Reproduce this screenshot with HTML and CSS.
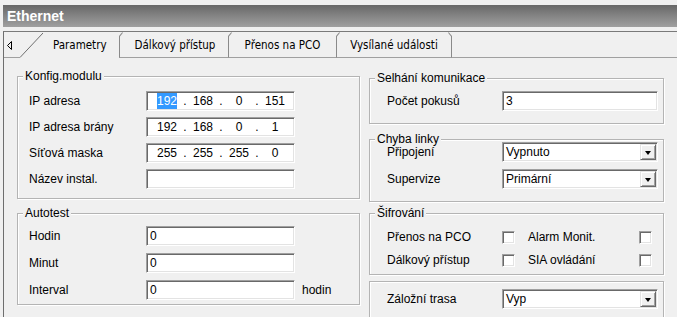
FILE: index.html
```html
<!DOCTYPE html>
<html>
<head>
<meta charset="utf-8">
<link rel="stylesheet" href="styles.css">
</head>
<body>
<div class="win">
  <div class="title">Ethernet</div>
  <div class="body">
    <div class="tabs">
      <div class="tab-scroll">
        <svg width="6" height="9" viewBox="0 0 6 9"><polygon points="4.5,0.5 4.5,8.5 0.5,4.5" fill="none" stroke="#000" stroke-width="1"/></svg>
      </div>
      <div class="tab active">
        <svg class="slant" width="23" height="26" viewBox="0 0 23 26"><line x1="0" y1="25.5" x2="23" y2="1" stroke="#6e6e6e" stroke-width="1"/></svg>
        <span class="tab-label">Parametry</span>
      </div>
      <div class="tab t2">Dálkový přístup</div>
      <div class="tab t3">Přenos na PCO</div>
      <div class="tab t4 last">Vysílané události</div>
      <div class="tab-fill"></div>
    </div>
    <div class="panel">
      <div class="col col-left">
        <div class="group g-konfig">
          <span class="legend">Konfig.modulu</span>
          <div class="row"><span class="label">IP adresa</span>
            <div class="field ip"><span class="oct"><span class="sel">192</span></span><span class="dot">.</span><span class="oct">168</span><span class="dot">.</span><span class="oct">0</span><span class="dot">.</span><span class="oct">151</span></div>
          </div>
          <div class="row"><span class="label">IP adresa brány</span>
            <div class="field ip"><span class="oct">192</span><span class="dot">.</span><span class="oct">168</span><span class="dot">.</span><span class="oct">0</span><span class="dot">.</span><span class="oct">1</span></div>
          </div>
          <div class="row"><span class="label">Síťová maska</span>
            <div class="field ip"><span class="oct">255</span><span class="dot">.</span><span class="oct">255</span><span class="dot">.</span><span class="oct">255</span><span class="dot">.</span><span class="oct">0</span></div>
          </div>
          <div class="row"><span class="label">Název instal.</span>
            <div class="field"></div>
          </div>
        </div>
        <div class="group g-auto">
          <span class="legend">Autotest</span>
          <div class="row"><span class="label">Hodin</span><div class="field">0</div></div>
          <div class="row"><span class="label">Minut</span><div class="field">0</div></div>
          <div class="row"><span class="label">Interval</span><div class="field">0</div><span class="unit">hodin</span></div>
        </div>
      </div>
      <div class="col col-right">
        <div class="group g-selh">
          <span class="legend">Selhání komunikace</span>
          <div class="row"><span class="label">Počet pokusů</span><div class="field">3</div></div>
        </div>
        <div class="group g-chyba">
          <span class="legend">Chyba linky</span>
          <div class="row"><span class="label">Připojení</span><div class="field select">Vypnuto<span class="drop"><span class="arrow"></span></span></div></div>
          <div class="row"><span class="label">Supervize</span><div class="field select">Primární<span class="drop"><span class="arrow"></span></span></div></div>
        </div>
        <div class="group g-sifr">
          <span class="legend">Šifrování</span>
          <div class="row"><span class="label">Přenos na PCO</span><span class="check"></span><span class="label2">Alarm Monit.</span><span class="check"></span></div>
          <div class="row"><span class="label">Dálkový přístup</span><span class="check"></span><span class="label2">SIA ovládání</span><span class="check"></span></div>
        </div>
        <div class="group g-zal">
          <div class="row"><span class="label">Záložní trasa</span><div class="field select">Vyp<span class="drop"><span class="arrow"></span></span></div></div>
        </div>
      </div>
    </div>
  </div>
</div>
</body>
</html>
```

FILE: styles.css
```css
html, body {
  margin: 0;
  padding: 0;
}
body {
  width: 677px;
  height: 317px;
  overflow: hidden;
  background: #f0f0f0;
  font-family: "Liberation Sans", Arial, sans-serif;
  font-size: 12px;
  color: #000;
}
.win {
  padding: 5px 0 0 3px;
}
.title {
  height: 22px;
  line-height: 22px;
  padding-left: 4px;
  background: linear-gradient(#686868, #a0a0a0);
  color: #fff;
  font-weight: bold;
  font-size: 14px;
}
.body {
  margin-top: 4px;
  border-left: 1px solid #6e6e6e;
  border-top: 1px solid #7a7a7a;
  height: 285px;
  overflow: hidden;
}
.tabs {
  display: flex;
  height: 26px;
  font-family: "DejaVu Sans Condensed", "DejaVu Sans", sans-serif;
  font-stretch: condensed;
  font-size: 11.5px;
}
.tab-scroll {
  width: 16px;
  box-sizing: border-box;
  border-bottom: 1px solid #a0a0a0;
  padding: 9px 0 0 3px;
}
.tab-scroll svg {
  display: block;
}
.tab {
  position: relative;
  box-sizing: border-box;
  height: 22px;
  margin-top: 4px;
  border-left: 1px solid #8a8a8a;
  border-bottom: 1px solid #a0a0a0;
  line-height: 19px;
  text-align: center;
  color: #000;
}
.tab::before {
  content: "";
  position: absolute;
  left: -1px;
  top: 0;
  width: 5px;
  height: 1px;
  background: #8a8a8a;
  transform-origin: 0 0;
  transform: rotate(-50deg);
}
.tab.active {
  display: flex;
  height: 26px;
  margin-top: 0;
  border: none;
  width: 99px;
}
.tab.active::before {
  display: none;
}
.slant {
  display: block;
  flex: none;
}
.tab-label {
  padding-left: 10px;
  line-height: 27px;
}
.t2 { width: 109px; padding-left: 2px; }
.t3 { width: 108px; }
.t4 { width: 116px; }
.tab.last {
  border-right: 1px solid #8a8a8a;
}
.tab.last::after {
  content: "";
  position: absolute;
  right: -1px;
  top: 0;
  width: 5px;
  height: 1px;
  background: #8a8a8a;
  transform-origin: 100% 0;
  transform: rotate(50deg);
}
.tab-fill {
  flex: 1;
  border-bottom: 1px solid #a0a0a0;
}
.panel {
  display: flex;
  padding-left: 13px;
}
.col {
  display: flex;
  flex-direction: column;
}
.col-left {
  width: 343px;
}
.col-right {
  width: 295px;
  margin-left: 9px;
}
.group {
  position: relative;
  box-sizing: border-box;
  border: 1px solid #b4b4b4;
  box-shadow: inset 1px 1px 0 #fff, 1px 1px 0 #fff;
  display: flex;
  flex-direction: column;
}
.legend {
  position: absolute;
  left: 5px;
  top: -8px;
  padding: 0 2px;
  background: #f0f0f0;
  line-height: 14px;
}
.col-left .group {
  padding-left: 11px;
}
.col-right .group {
  padding-left: 17px;
}
.g-konfig {
  margin-top: 18px;
  height: 123px;
  padding-top: 14px;
  gap: 6px;
}
.g-auto {
  margin-top: 14px;
  height: 92px;
  padding-top: 12px;
  gap: 7px;
}
.g-selh {
  margin-top: 20px;
  height: 46px;
  padding-top: 12px;
}
.g-chyba {
  margin-top: 15px;
  height: 63px;
  padding-top: 2px;
  gap: 7px;
}
.g-sifr {
  margin-top: 11px;
  height: 62px;
  padding-top: 13px;
  gap: 3px;
}
.g-zal {
  margin-top: 6px;
  height: 40px;
  padding-top: 7px;
}
.row {
  display: flex;
  align-items: center;
  height: 20px;
}
.label {
  line-height: 20px;
  white-space: nowrap;
}
.col-left .label {
  width: 117px;
}
.col-right .label {
  width: 115px;
}
.field {
  box-sizing: border-box;
  height: 20px;
  width: 149px;
  background: #fff;
  border: 1px solid;
  border-color: #a0a0a0 #fff #fff #a0a0a0;
  box-shadow: inset 1px 1px 0 #696969, inset -1px -1px 0 #e3e3e3;
  padding-left: 3px;
  line-height: 18px;
}
.col-right .field {
  width: 156px;
}
.ip {
  display: flex;
  padding-left: 5px;
}
.oct {
  width: 30px;
  text-align: center;
}
.dot {
  width: 6px;
  text-align: center;
}
.sel {
  background: #3399ff;
  color: #fff;
  padding: 1px 0;
}
.unit {
  margin-left: 7px;
}
.select {
  position: relative;
  display: flex;
  justify-content: space-between;
  padding-right: 1px;
}
.drop {
  box-sizing: border-box;
  width: 16px;
  height: 16px;
  margin-top: 1px;
  background: #f0f0f0;
  border: 1px solid;
  border-color: #e3e3e3 #696969 #696969 #e3e3e3;
  box-shadow: inset 1px 1px 0 #fff, inset -1px -1px 0 #a0a0a0;
  display: flex;
  align-items: center;
  justify-content: center;
}
.arrow {
  width: 0;
  height: 0;
  border-left: 3.5px solid transparent;
  border-right: 3.5px solid transparent;
  border-top: 4px solid #000;
  margin-top: 1px;
}
.check {
  box-sizing: border-box;
  width: 13px;
  height: 13px;
  background: #fff;
  border: 1px solid;
  border-color: #a0a0a0 #fff #fff #a0a0a0;
  box-shadow: inset 1px 1px 0 #696969, inset -1px -1px 0 #e3e3e3;
}
.label2 {
  width: 111px;
  margin-left: 13px;
  line-height: 20px;
}
```
